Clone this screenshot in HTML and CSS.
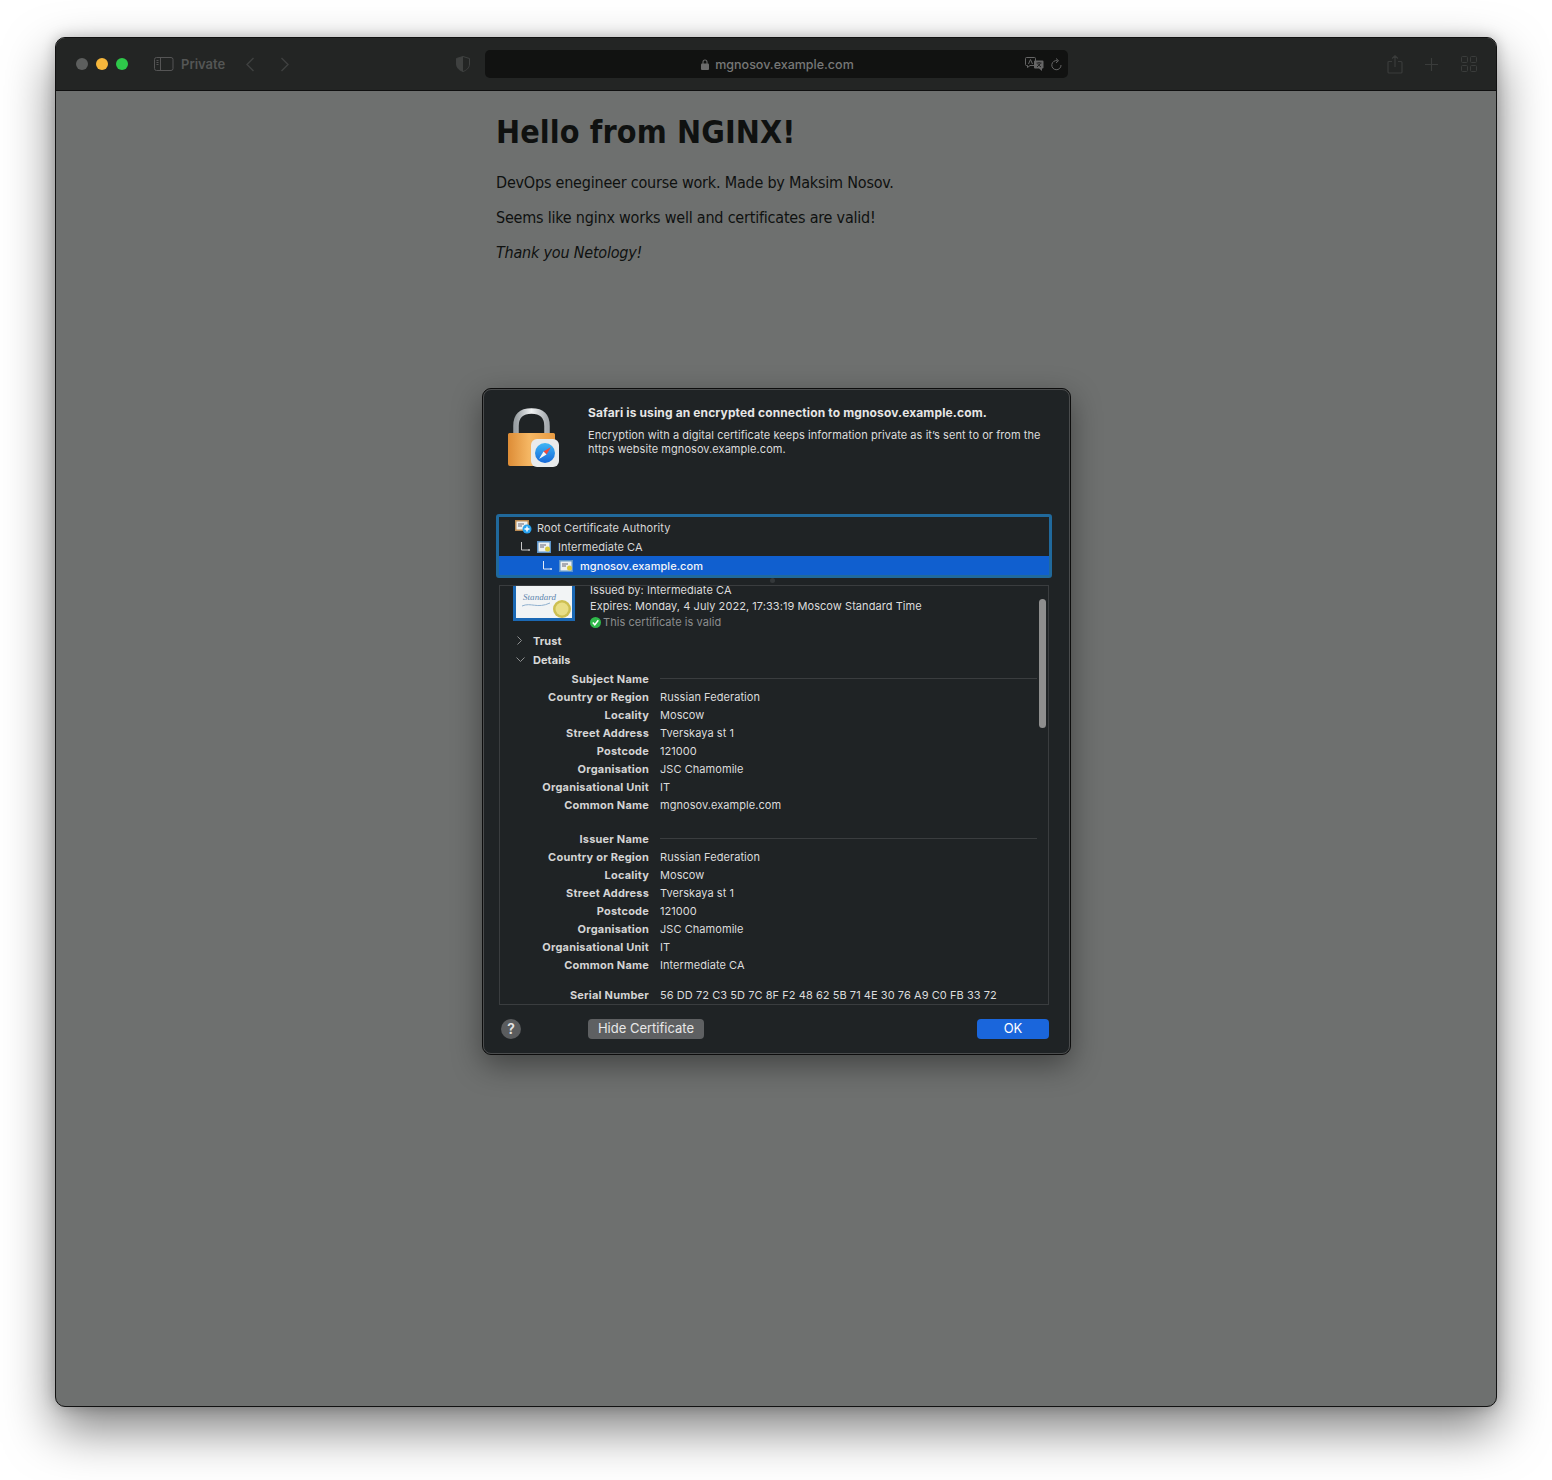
FILE: index.html
```html
<!DOCTYPE html>
<html lang="en">
<head>
<meta charset="utf-8">
<title>Hello from NGINX!</title>
<link rel="stylesheet" href="styles.css">
</head>
<body>
<div class="window">
  <header class="toolbar">
    <div class="lights"><span class="light grey"></span><span class="light yellow"></span><span class="light green"></span></div>
    <svg class="tb-icon sidebar" width="20" height="14" viewBox="0 0 20 14"><rect x=".5" y=".5" width="18.5" height="13" rx="2" fill="none" stroke="#555"/><path d="M6.5 1v12" stroke="#555"/><path d="M2.5 3.5h2M2.5 5.5h2M2.5 7.5h2" stroke="#555"/></svg>
    <span class="private">Private</span>
    <svg class="tb-icon back" width="10" height="15" viewBox="0 0 10 15"><path d="M8.5 1 2 7.500 8.500 14" fill="none" stroke="#3f4140" stroke-width="1.400"/></svg>
    <svg class="tb-icon fwd" width="10" height="15" viewBox="0 0 10 15"><path d="M1.500 1 8 7.500 1.500 14" fill="none" stroke="#3f4140" stroke-width="1.400"/></svg>
    <svg class="tb-icon shield" width="14" height="16" viewBox="0 0 14 16"><path d="M7 .5 13.500 2.500V8c0 4-3 6.300-6.500 7.500C3.500 14.300.5 12 .5 8V2.500z" fill="none" stroke="#3f4140"/><path d="M7 .5 .5 2.500V8c0 4 3 6.300 6.500 7.500z" fill="#3f4140"/></svg>
    <div class="address">
      <svg class="addr-lock" width="8" height="11" viewBox="0 0 8 11"><path d="M2 5V3a2 2 0 0 1 4 0v2" fill="none" stroke="#6b6b6b" stroke-width="1.100"/><rect y="4.500" width="8" height="6.500" rx="1" fill="#6b6b6b"/></svg>
      <span class="addr-text">mgnosov.example.com</span>
      <svg class="addr-translate" width="19" height="14" viewBox="0 0 19 14"><path d="M1.500.5h8a1 1 0 0 1 1 1v6a1 1 0 0 1-1 1H5L2.500 10.500v-2h-1a1 1 0 0 1-1-1v-6a1 1 0 0 1 1-1z" fill="none" stroke="#666"/><path d="M3.500 7 5.500 2.500 7.500 7" fill="none" stroke="#666"/><path d="M10 3.500h7.500a1 1 0 0 1 1 1v6a1 1 0 0 1-1 1h-.5V14l-3-2.500H10a1 1 0 0 1-1-1v-6a1 1 0 0 1 1-1z" fill="#666"/><path d="M11.500 6h5M14 5v1M12 10l3.500-3.500M12.500 7l3.500 3" stroke="#222" fill="none"/></svg>
      <svg class="addr-reload" width="11" height="13" viewBox="0 0 11 13"><path d="M6.500 2.700A4.600 4.600 0 1 0 10 7" fill="none" stroke="#666"/><path d="M5 .5 7.500 2.700 5 4.900" fill="none" stroke="#666"/></svg>
    </div>
    <svg class="tb-icon share" width="16" height="19" viewBox="0 0 16 19"><path d="M5 6.500H2a1 1 0 0 0-1 1v9.500a1 1 0 0 0 1 1h12a1 1 0 0 0 1-1V7.500a1 1 0 0 0-1-1h-3M8 12V1M5 3.500 8 .8l3 2.700" fill="none" stroke="#3a3c3b" stroke-width="1.200"/></svg>
    <svg class="tb-icon plus" width="13" height="13" viewBox="0 0 13 13"><path d="M6.500 0v13M0 6.500h13" stroke="#3a3c3b" stroke-width="1.200"/></svg>
    <svg class="tb-icon tabs" width="16" height="16" viewBox="0 0 16 16"><g fill="none" stroke="#3a3c3b"><rect x=".5" y=".5" width="6" height="6" rx="1"/><rect x="9.500" y=".5" width="6" height="6" rx="1"/><rect x=".5" y="9.500" width="6" height="6" rx="1"/><rect x="9.500" y="9.500" width="6" height="6" rx="1"/></g></svg>
  </header>

  <main class="page">
    <article class="nginx">
      <h1>Hello from NGINX!</h1>
      <p>DevOps enegineer course work. Made by Maksim Nosov.</p>
      <p>Seems like nginx works well and certificates are valid!</p>
      <p><em>Thank you Netology!</em></p>
    </article>

    <section class="sheet">
      <div class="sheet-head">
        <svg class="big-lock" width="52" height="60" viewBox="0 0 52 60">
          <defs>
            <linearGradient id="body" x1="0" x2="1" y1="0" y2="0"><stop offset="0" stop-color="#dd8c36"/><stop offset=".45" stop-color="#f5b764"/><stop offset="1" stop-color="#e99b42"/></linearGradient>
            <linearGradient id="shk" x1="0" x2="1" y1="0" y2="0"><stop offset="0" stop-color="#9aa0a4"/><stop offset=".5" stop-color="#f0f2f3"/><stop offset="1" stop-color="#a6abaf"/></linearGradient>
            <linearGradient id="comp" x1="0" x2="0" y1="0" y2="1"><stop offset="0" stop-color="#3fb6f5"/><stop offset="1" stop-color="#1668d8"/></linearGradient>
          </defs>
          <path d="M8 26V18C8 8 13 3 23.500 3S39 8 39 18V26" fill="none" stroke="url(#shk)" stroke-width="5.500"/>
          <path d="M1.500 25h44a1.500 1.500 0 0 1 1.500 1.500V58H2a2 2 0 0 1-2-2V26.500A1.500 1.500 0 0 1 1.500 25z" fill="url(#body)"/>
          <rect x="23" y="31" width="28" height="28" rx="6" fill="#e9ebec"/>
          <circle cx="37" cy="45" r="10" fill="url(#comp)"/>
          <path d="M43 39 38.500 46.500 35.500 43.500z" fill="#f04a3c"/>
          <path d="M31 51 35.500 43.500 38.500 46.500z" fill="#f4f4f4"/>
        </svg>
        <div class="sheet-msg">
          <h2>Safari is using an encrypted connection to mgnosov.example.com.</h2>
          <p>Encryption with a digital certificate keeps information private as it’s sent to or from the https website mgnosov.example.com.</p>
        </div>
      </div>

      <ul class="tree">
        <li class="tree-row lvl0">
          <svg class="mini-cert" width="17" height="14" viewBox="0 0 17 14"><rect width="14" height="11" fill="#b98a52"/><rect x="1.500" y="1.500" width="11" height="8" fill="#eef0f0"/><path d="M3 4h6M3 6h4" stroke="#667"/><circle cx="12" cy="9" r="4.500" fill="#29a3f0"/><path d="M12 6.500v5M9.500 9h5" stroke="#fff" stroke-width="1.400"/></svg>
          <span>Root Certificate Authority</span>
        </li>
        <li class="tree-row lvl1">
          <svg class="elbow" width="10" height="10" viewBox="0 0 10 10"><path d="M1.500 0v8H8" fill="none" stroke="#c8c8c8"/><circle cx="9" cy="8" r="1" fill="#c8c8c8"/></svg>
          <svg class="mini-cert" width="14" height="12" viewBox="0 0 14 12"><rect width="14" height="12" fill="#5d94c8"/><rect x="1.500" y="1.500" width="11" height="9" fill="#eef0f0"/><path d="M3 4h6M3 6h4" stroke="#667"/><circle cx="10.500" cy="8" r="2.500" fill="#d8c93c"/></svg>
          <span>Intermediate CA</span>
        </li>
        <li class="tree-row lvl2 selected">
          <svg class="elbow" width="10" height="10" viewBox="0 0 10 10"><path d="M1.500 0v8H8" fill="none" stroke="#e4ecf8"/><circle cx="9" cy="8" r="1" fill="#e4ecf8"/></svg>
          <svg class="mini-cert" width="14" height="12" viewBox="0 0 14 12"><rect width="14" height="12" fill="#5d94c8"/><rect x="1.500" y="1.500" width="11" height="9" fill="#eef0f0"/><path d="M3 4h6M3 6h4" stroke="#667"/><circle cx="10.500" cy="8" r="2.500" fill="#d8c93c"/></svg>
          <span>mgnosov.example.com</span>
        </li>
      </ul>
      <span class="grip"></span>

      <div class="details">
        <div class="scrollbar"></div>
        <div class="summary">
          <svg class="cert-pic" width="62" height="35" viewBox="0 0 62 35"><rect width="62" height="35" fill="#1b68b4"/><rect x="3" y="0" width="56" height="32" fill="#f2f4f5"/><text x="10" y="14" class="cert-script">Standard</text><path d="M9 20c9-4 15 3 28-3" fill="none" stroke="#8fb0cf"/><circle cx="49" cy="23" r="9" fill="#cdbf52"/><circle cx="49" cy="23" r="6.500" fill="#e9de86"/></svg>
          <div class="summary-text">
            <div class="issued">Issued by: Intermediate CA</div>
            <div>Expires: Monday, 4 July 2022, 17:33:19 Moscow Standard Time</div>
            <div class="valid"><svg width="11" height="11" viewBox="0 0 11 11"><circle cx="5.500" cy="5.500" r="5.500" fill="#2fb84a"/><path d="M2.800 5.600 4.800 7.800 8.300 3.300" fill="none" stroke="#fff" stroke-width="1.500"/></svg><span>This certificate is valid</span></div>
          </div>
        </div>
        <div class="disclosure"><svg width="7" height="9" viewBox="0 0 7 9"><path d="M1.500 .5 5.500 4.500 1.500 8.500" fill="none" stroke="#8d8f90"/></svg><b>Trust</b></div>
        <div class="disclosure"><svg width="9" height="7" viewBox="0 0 9 7"><path d="M.5 1.500 4.500 5.500 8.500 1.500" fill="none" stroke="#8d8f90"/></svg><b>Details</b></div>

        <dl class="fields subject">
          <dt>Subject Name</dt><dd class="rule"></dd>
          <dt>Country or Region</dt><dd>Russian Federation</dd>
          <dt>Locality</dt><dd>Moscow</dd>
          <dt>Street Address</dt><dd>Tverskaya st 1</dd>
          <dt>Postcode</dt><dd>121000</dd>
          <dt>Organisation</dt><dd>JSC Chamomile</dd>
          <dt>Organisational Unit</dt><dd>IT</dd>
          <dt>Common Name</dt><dd>mgnosov.example.com</dd>
        </dl>
        <dl class="fields issuer">
          <dt>Issuer Name</dt><dd class="rule"></dd>
          <dt>Country or Region</dt><dd>Russian Federation</dd>
          <dt>Locality</dt><dd>Moscow</dd>
          <dt>Street Address</dt><dd>Tverskaya st 1</dd>
          <dt>Postcode</dt><dd>121000</dd>
          <dt>Organisation</dt><dd>JSC Chamomile</dd>
          <dt>Organisational Unit</dt><dd>IT</dd>
          <dt>Common Name</dt><dd>Intermediate CA</dd>
        </dl>
        <dl class="fields serial">
          <dt>Serial Number</dt><dd>56 DD 72 C3 5D 7C 8F F2 48 62 5B 71 4E 30 76 A9 C0 FB 33 72</dd>
        </dl>
      </div>

      <div class="sheet-foot">
        <span class="help">?</span>
        <span class="btn hide">Hide Certificate</span>
        <span class="btn ok">OK</span>
      </div>
    </section>
  </main>
</div>
</body>
</html>
```

FILE: styles.css
```css
* { box-sizing: border-box; }
html, body { margin: 0; height: 100%; }
body {
  background: #fff;
  padding: 37px 55px 73px;
  font-family: Inter, Roboto, sans-serif;
}
.window {
  height: 1370px;
  border: 1px solid #111;
  border-radius: 10px;
  overflow: hidden;
  box-shadow: 0 22px 50px rgba(0,0,0,.5), 0 0 14px rgba(0,0,0,.22);
  display: flex;
  flex-direction: column;
  background: #6e706f;
}
.toolbar {
  height: 53px;
  flex: none;
  background: #232524;
  border-bottom: 1px solid #0f0f0f;
  display: flex;
  align-items: center;
  padding-left: 20px;
  padding-right: 19px;
}
.lights { display: flex; gap: 8px; }
.light { width: 12px; height: 12px; border-radius: 50%; }
.grey { background: #5d5f5e; }
.yellow { background: #f6b73c; }
.green { background: #2ec84a; }
.tb-icon { flex: none; display: block; }
.sidebar { margin-left: 26px; }
.private { margin-left: 7px; font-size: 13px; font-weight: 600; color: #545655; }
.back { margin-left: 20px; }
.fwd { margin-left: 25px; }
.shield { margin-left: 166px; }
.address {
  margin-left: 15px;
  width: 583px;
  height: 28px;
  background: #111211;
  border-radius: 5px;
  display: flex;
  align-items: center;
  color: #777;
  font-size: 12.5px;
  padding-left: 216px;
}
.addr-lock { flex: none; }
.addr-text { margin-left: 6px; font-weight: 500; color: #777877; }
.addr-translate { margin-left: 171px; flex: none; }
.addr-reload { margin-left: 7px; flex: none; }
.share { margin-left: 319px; }
.plus { margin-left: 22px; }
.tabs { margin-left: 23px; }

.page { flex: 1; position: relative; }
.nginx {
  width: 560px;
  margin: 0 auto;
  color: #0f1110;
  font-family: "DejaVu Sans Condensed", "DejaVu Sans", sans-serif;
  font-size: 16px;
  letter-spacing: -.21px;
}
.nginx h1 { margin: 22px 0 0; font-size: 32px; line-height: 38px; font-weight: 700; letter-spacing: .12px; }
.nginx p { margin: 0; line-height: 19px; margin-top: 16px; }
.nginx h1 + p { margin-top: 22px; }

.sheet {
  position: absolute;
  left: 426px;
  top: 297px;
  width: 589px;
  height: 667px;
  background: #1f2325;
  border: 1px solid #0d0d0d;
  outline: 1px solid #4a4c4d;
  outline-offset: -2px;
  border-radius: 9px;
  box-shadow: 0 10px 30px rgba(0,0,0,.4);
  color: #dcdcdc;
  font-size: 11px;
  line-height: 14px;
  letter-spacing: .06px;
  display: flex;
  flex-direction: column;
  overflow: hidden;
}
.sheet-head { height: 125px; flex: none; display: flex; padding: 16px 14px 0 25px; }
.big-lock { flex: none; display: block; margin-top: 3px; }
.sheet-msg { margin-left: 28px; }
.sheet-msg h2 { margin: 0 0 8px; font-size: 12px; line-height: 15px; font-weight: 700; color: #e6e6e6; letter-spacing: .13px; }
.sheet-msg p { margin: 0; }

.tree {
  list-style: none;
  margin: 0 18px 0 13px;
  padding: 1px 0 0;
  height: 64px;
  flex: none;
  border: 3px solid #20699c;
  border-radius: 3px;
}
.tree-row { height: 19px; display: flex; align-items: center; gap: 7px; color: #d8d8d8; }
.lvl0 { padding-left: 16px; gap: 5px; }
.lvl1 { padding-left: 21px; }
.lvl2 { padding-left: 43px; }
.selected { background: #105fcf; color: #f4f6fa; font-weight: 500; }
.mini-cert { flex: none; }
.lvl0 .mini-cert { margin-top: -1px; }
.grip {
  position: absolute;
  left: 287px;
  top: 189px;
  width: 5px;
  height: 5px;
  border-radius: 50%;
  background: #34383a;
}

.details {
  margin: 7px 21px 0 16px;
  height: 420px;
  flex: none;
  border: 1px solid #3a3d3f;
  position: relative;
  overflow: hidden;
}
.scrollbar {
  position: absolute;
  left: 539px;
  top: 13px;
  width: 7px;
  height: 129px;
  border-radius: 4px;
  background: #8e8e8e;
}
.summary { display: flex; height: 45px; padding-left: 13px; }
.cert-pic { flex: none; display: block; }
.cert-script { font-family: "Liberation Serif", serif; font-style: italic; font-size: 9px; fill: #5d86ad; }
.summary-text { margin-left: 15px; line-height: 16px; }
.issued { height: 8px; line-height: 8px; margin-bottom: 4px; }
.valid { display: flex; align-items: center; gap: 2px; color: #8b8d8e; }
.disclosure { height: 19px; display: flex; align-items: center; color: #d8d8d8; position: relative; padding-left: 33px; }
.disclosure svg { position: absolute; left: 16px; }
.disclosure b { font-weight: 700; }
.fields {
  margin: 0;
  display: grid;
  grid-template-columns: 149px 1fr;
  column-gap: 11px;
  grid-auto-rows: 18px;
  align-items: center;
  padding-right: 11px;
}
.fields dt { text-align: right; font-weight: 700; color: #d4d4d4; letter-spacing: .2px; }
.fields dd { margin: 0; color: #dcdcdc; }
.fields .rule { height: 1px; background: #3a3d3f; margin-bottom: 2px; }
.subject { margin-top: 1px; }
.issuer { margin-top: 16px; }
.serial { margin-top: 12px; }

.sheet-foot { flex: 1; display: flex; align-items: center; padding: 0 21px 2px 18px; }
.help {
  width: 20px; height: 20px; border-radius: 50%;
  background: #5a5c5e; color: #e4e4e4;
  font-size: 14px; font-weight: 600; line-height: 20px; text-align: center;
}
.btn { height: 20px; border-radius: 4px; font-size: 13px; line-height: 19px; text-align: center; color: #e8e8e8; letter-spacing: 0; }
.hide { margin-left: 67px; width: 116px; background: #5e6062; }
.ok { margin-left: auto; width: 72px; background: #1a66dc; color: #fff; }
```
